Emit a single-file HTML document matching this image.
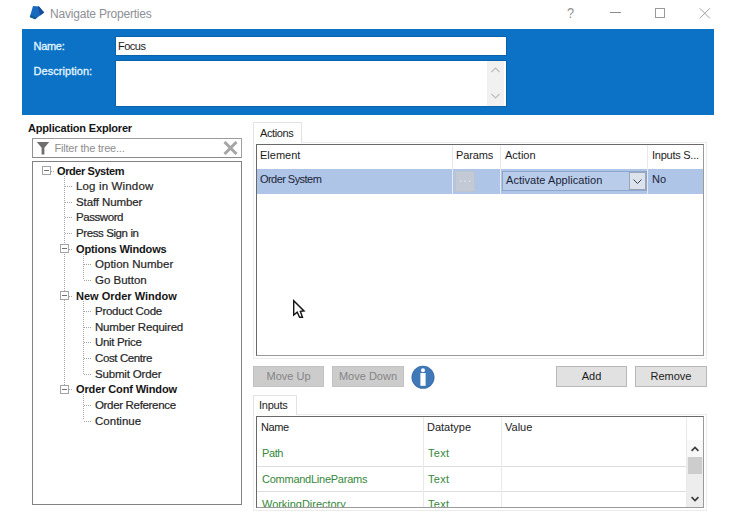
<!DOCTYPE html>
<html><head><meta charset="utf-8">
<style>
*{box-sizing:border-box;margin:0;padding:0}
html,body{width:735px;height:528px;background:#fff;overflow:hidden}
body{position:relative;font-family:"Liberation Sans",sans-serif;font-size:11px;color:#1c1c1c}
.abs{position:absolute}
.t{position:absolute;white-space:nowrap;line-height:14px}
#title{left:50px;top:7px;font-size:12px;color:#8d9095;letter-spacing:-0.2px}
#hdr{left:22px;top:29px;width:692px;height:85.5px;background:#0b72c5}
.hl{color:#e4f6ff;font-size:11px;-webkit-text-stroke:0.3px #e4f6ff}
#name{left:116px;top:37px;width:390px;height:18px;background:#fff;box-shadow:0 0 0 1px #0a62ab}
#desc{left:116px;top:61px;width:390px;height:45px;background:#fff;box-shadow:0 0 0 1px #0a62ab}
#dsb{left:487px;top:61px;width:17px;height:45px;background:#f1f1f1}
.tn{font-size:11.5px;-webkit-text-stroke:0.2px #262626;color:#262626}
.tb{font-weight:bold;color:#151515;font-size:11px}
.box{position:absolute;border:1px solid #7a7a7a;background:#fff}
.btn{position:absolute;border:1px solid #b8b8b8;background:#e1e1e1;font-size:11px;text-align:center;line-height:19px;height:21px;color:#1c1c1c}
.btn.dis{background:#cccccc;border-color:#c2c2c2;color:#858585}
.tab{position:absolute;background:#fff;border:1px solid #e2e2e2;border-bottom:none;font-size:11px;line-height:14px;color:#1c1c1c}
.ex{position:absolute;width:9px;height:9px;border:1px solid #a3a3a3;background:#fff}
.ex:after{content:"";position:absolute;left:1px;top:3px;width:5px;height:1px;background:#707070}
.dh{position:absolute;height:1px;background:repeating-linear-gradient(90deg,#a5a5a5 0 1px,transparent 1px 2px)}
.dv{position:absolute;width:1px;background:repeating-linear-gradient(180deg,#a5a5a5 0 1px,transparent 1px 2px)}
.grn{color:#35883a}
.vl{position:absolute;width:1px;background:#e9e9e9}
.hln{position:absolute;height:1px;background:#dedede}
.g{letter-spacing:-0.25px}
</style></head><body>
<!-- title bar -->
<svg class="abs" style="left:29px;top:5px" width="16" height="15" viewBox="29 5 16 15"><path d="M33 6 L39 6.4 L44.2 12.6 L35 19.2 L29.8 17 Z" fill="#1769bd"/><path d="M38 6.3 L39 6.4 L44.2 12.6 L40 15.6 Z" fill="#1a4a98"/><path d="M29.8 17 L35 19.2 L37 17.8 L30.3 15.2 Z" fill="#0f5a8a"/></svg>
<div class="t" id="title">Navigate Properties</div>
<div class="t" style="left:567px;top:6px;font-size:15px;color:#929292;transform:scaleX(0.85);transform-origin:left">?</div>
<div class="abs" style="left:610px;top:12px;width:11px;height:1px;background:#8a8a8a"></div>
<div class="abs" style="left:655px;top:8px;width:10px;height:10px;border:1px solid #999"></div>
<svg class="abs" style="left:699px;top:8px" width="12" height="11" viewBox="0 0 12 11"><path d="M0.8 0.3 L10.8 10.3 M10.8 0.3 L0.8 10.3" stroke="#a0a0a0" stroke-width="1" fill="none"/></svg>
<!-- header -->
<div class="abs" id="hdr"></div>
<div class="t hl" style="left:33.5px;top:39px;letter-spacing:-0.3px">Name:</div>
<div class="t hl" style="left:33.5px;top:64px;letter-spacing:0.05px">Description:</div>
<div class="abs" id="name"></div>
<div class="t" style="left:118px;top:39px;font-size:11px;letter-spacing:-0.5px">Focus</div>
<div class="abs" id="desc"></div>
<div class="abs" id="dsb"></div>
<svg class="abs" style="left:491px;top:67px" width="9" height="6" viewBox="0 0 9 6"><path d="M0.5 5 L4.5 1 L8.5 5" stroke="#bdbdbd" stroke-width="1.2" fill="none"/></svg>
<svg class="abs" style="left:491px;top:93px" width="9" height="6" viewBox="0 0 9 6"><path d="M0.5 1 L4.5 5 L8.5 1" stroke="#bdbdbd" stroke-width="1.2" fill="none"/></svg>
<!-- left panel -->
<div class="t" style="left:28px;top:121px;font-size:11px;font-weight:bold;color:#151515;letter-spacing:-0.18px">Application Explorer</div>
<div class="box" style="left:32px;top:138px;width:210px;height:20px;border-color:#9c9c9c #a0a0a0 #8a8a8a #909090"></div>
<svg class="abs" style="left:36px;top:141px" width="14" height="14" viewBox="0 0 14 14"><path d="M0.8 1 H13.2 L8.4 6.8 V13.4 H5.6 V6.8 Z" fill="#6f6f6f"/></svg>
<div class="t" style="left:54.5px;top:141px;font-size:11px;color:#8e8e8e;letter-spacing:-0.22px">Filter the tree...</div>
<svg class="abs" style="left:223px;top:141px" width="15" height="14" viewBox="0 0 15 14"><path d="M1.5 1 L13.5 13 M13.5 1 L1.5 13" stroke="#a6a6a6" stroke-width="3" fill="none"/></svg>
<div class="box" style="left:32px;top:161px;width:210px;height:344px;border-color:#828282"></div>
<div id="tree">
<div class="dv" style="left:64px;top:175.5px;height:209.8px"></div>
<div class="dv" style="left:83px;top:253.6px;height:26.2px"></div>
<div class="dv" style="left:83px;top:300.5px;height:73.1px"></div>
<div class="dv" style="left:83px;top:394.2px;height:26.2px"></div>
<div class="t tb" style="left:57px;top:163.5px;letter-spacing:-0.42px">Order System</div>
<div class="ex" style="left:42px;top:166.0px"></div>
<div class="dh" style="left:51px;top:170.5px;width:4px"></div>
<div class="t tn" style="left:76px;top:179.1px;letter-spacing:0.15px">Log in Window</div>
<div class="dh" style="left:65px;top:186.1px;width:8px"></div>
<div class="t tn" style="left:76px;top:194.8px;letter-spacing:-0.11px">Staff Number</div>
<div class="dh" style="left:65px;top:201.8px;width:8px"></div>
<div class="t tn" style="left:76px;top:210.4px;letter-spacing:-0.44px">Password</div>
<div class="dh" style="left:65px;top:217.4px;width:8px"></div>
<div class="t tn" style="left:76px;top:226.0px;letter-spacing:-0.40px">Press Sign in</div>
<div class="dh" style="left:65px;top:233.0px;width:8px"></div>
<div class="t tb" style="left:76px;top:241.6px;letter-spacing:-0.15px">Options Windows</div>
<div class="ex" style="left:60px;top:244.1px"></div>
<div class="dh" style="left:69px;top:248.6px;width:4px"></div>
<div class="t tn" style="left:95px;top:257.2px;letter-spacing:0.02px">Option Number</div>
<div class="dh" style="left:84px;top:264.2px;width:8px"></div>
<div class="t tn" style="left:95px;top:272.9px;letter-spacing:-0.01px">Go Button</div>
<div class="dh" style="left:84px;top:279.9px;width:8px"></div>
<div class="t tb" style="left:76px;top:288.5px;letter-spacing:-0.00px">New Order Window</div>
<div class="ex" style="left:60px;top:291.0px"></div>
<div class="dh" style="left:69px;top:295.5px;width:4px"></div>
<div class="t tn" style="left:95px;top:304.1px;letter-spacing:-0.28px">Product Code</div>
<div class="dh" style="left:84px;top:311.1px;width:8px"></div>
<div class="t tn" style="left:95px;top:319.8px;letter-spacing:-0.18px">Number Required</div>
<div class="dh" style="left:84px;top:326.8px;width:8px"></div>
<div class="t tn" style="left:95px;top:335.4px;letter-spacing:-0.33px">Unit Price</div>
<div class="dh" style="left:84px;top:342.4px;width:8px"></div>
<div class="t tn" style="left:95px;top:351.0px;letter-spacing:-0.39px">Cost Centre</div>
<div class="dh" style="left:84px;top:358.0px;width:8px"></div>
<div class="t tn" style="left:95px;top:366.6px;letter-spacing:-0.17px">Submit Order</div>
<div class="dh" style="left:84px;top:373.6px;width:8px"></div>
<div class="t tb" style="left:76px;top:382.2px;letter-spacing:-0.13px">Order Conf Window</div>
<div class="ex" style="left:60px;top:384.8px"></div>
<div class="dh" style="left:69px;top:389.2px;width:4px"></div>
<div class="t tn" style="left:95px;top:397.9px;letter-spacing:-0.33px">Order Reference</div>
<div class="dh" style="left:84px;top:404.9px;width:8px"></div>
<div class="t tn" style="left:95px;top:413.5px;letter-spacing:0.02px">Continue</div>
<div class="dh" style="left:84px;top:420.5px;width:8px"></div>
</div>
<!-- right: actions -->
<div class="abs" style="left:253px;top:142px;width:454px;height:217px;border:1px solid #ececec"></div>
<div class="tab" style="left:253px;top:122px;width:49px;height:21px;padding:2.5px 0 0 6px"><span style="letter-spacing:-0.4px">Actions</span></div>
<div class="box" style="left:256px;top:144px;width:448px;height:212px;border-color:#696969 #9a9a9a #9a9a9a #696969"></div>
<div class="abs" style="left:257px;top:169px;width:446px;height:25px;background:#afc5e7"></div>
<div class="vl" style="left:452px;top:145px;height:49px"></div>
<div class="vl" style="left:500px;top:145px;height:49px"></div>
<div class="vl" style="left:647px;top:145px;height:49px"></div>
<div class="t" style="left:260px;top:147.5px">Element</div>
<div class="t" style="left:456px;top:147.5px;letter-spacing:-0.15px">Params</div>
<div class="t" style="left:505px;top:147.5px">Action</div>
<div class="t g" style="left:652px;top:147.5px">Inputs S...</div>
<div class="t" style="left:260px;top:172px;letter-spacing:-0.55px;color:#1b2438">Order System</div>
<div class="abs" style="left:455px;top:171px;width:20px;height:21px;background:#c3cad6;border:1px solid #bcc4d2"></div>
<div class="t" style="left:459px;top:171px;font-size:12px;color:#e4e8ef;letter-spacing:1px">...</div>
<div class="abs" style="left:502px;top:171px;width:145px;height:20px;background:#b9cdeb;border:1px solid #8ea7d0"></div>
<div class="t" style="left:506px;top:173px;color:#1b2438;letter-spacing:0.05px">Activate Application</div>
<div class="abs" style="left:629px;top:172px;width:17px;height:18px;border:1px solid #9aa6b8;background:#dde3ec"></div>
<svg class="abs" style="left:633px;top:179px" width="9" height="6" viewBox="0 0 9 6"><path d="M0.5 0.5 L4.5 4.5 L8.5 0.5" stroke="#444" stroke-width="1" fill="none"/></svg>
<div class="t" style="left:652px;top:172px;color:#1b2438">No</div>
<!-- cursor -->
<svg class="abs" style="left:290px;top:296px" width="18" height="24" viewBox="290 296 18 24"><path d="M293.7 300.8 V315 L297.2 312.2 L299.6 317.3 H302.5 L300.3 311.3 L304 311 Z" fill="#fff" stroke="#151515" stroke-width="1.4" stroke-linejoin="miter"/></svg>
<!-- buttons -->
<div class="btn dis" style="left:253px;top:366px;width:71px">Move Up</div>
<div class="btn dis" style="left:332px;top:366px;width:72px">Move Down</div>
<svg class="abs" style="left:410px;top:364px" width="26" height="26" viewBox="410 364 26 26"><circle cx="423" cy="377.3" r="11.5" fill="#3a6fa8"/><circle cx="423" cy="377" r="10.6" fill="#4079b8"/><circle cx="423" cy="370.2" r="2" fill="#fff"/><rect x="420.4" y="373" width="5.2" height="12.8" fill="#fff"/></svg>
<div class="btn" style="left:556px;top:366px;width:71px">Add</div>
<div class="btn" style="left:635px;top:366px;width:72px">Remove</div>
<!-- inputs -->
<div class="abs" style="left:253px;top:414px;width:454px;height:97px;border:1px solid #ececec"></div>
<div class="tab" style="left:253px;top:395px;width:44px;height:20px;padding:2px 0 0 5px"><span class="g">Inputs</span></div>
<div class="box" style="left:256px;top:416px;width:448px;height:92px;border-color:#696969 #9a9a9a #9a9a9a #696969"></div>
<div class="hln" style="left:257px;top:466px;width:430px"></div>
<div class="hln" style="left:257px;top:491px;width:430px"></div>
<div class="vl" style="left:423px;top:417px;height:90px"></div>
<div class="vl" style="left:501px;top:417px;height:90px"></div>
<div class="vl" style="left:686px;top:417px;height:90px"></div>
<div class="t" style="left:261px;top:420px;letter-spacing:-0.4px">Name</div>
<div class="t" style="left:427px;top:420px">Datatype</div>
<div class="t" style="left:505px;top:420px">Value</div>
<div class="t grn" style="left:262px;top:446px;letter-spacing:-0.4px">Path</div>
<div class="t grn" style="left:428px;top:446px;letter-spacing:0.3px">Text</div>
<div class="t grn g" style="left:262px;top:471.5px">CommandLineParams</div>
<div class="t grn" style="left:428px;top:472px;letter-spacing:0.3px">Text</div>
<div class="abs" style="left:257px;top:492px;width:430px;height:15px;overflow:hidden">
<div class="t grn" style="left:5px;top:5px;letter-spacing:-0.03px">WorkingDirectory</div>
<div class="t grn" style="left:171px;top:5px;letter-spacing:0.3px">Text</div></div>
<div class="abs" style="left:687px;top:440px;width:16px;height:67px;background:linear-gradient(180deg,#f8f8f8 0 17px,#ededed 17px)"></div>
<div class="abs" style="left:688px;top:457px;width:14px;height:17px;background:#cdcdcd"></div>
<svg class="abs" style="left:691px;top:446px" width="8" height="6" viewBox="0 0 8 6"><path d="M0.6 4.8 L4 1.4 L7.4 4.8" stroke="#3c3c3c" stroke-width="1.7" fill="none"/></svg>
<svg class="abs" style="left:691px;top:496px" width="8" height="6" viewBox="0 0 8 6"><path d="M0.6 1.2 L4 4.6 L7.4 1.2" stroke="#3c3c3c" stroke-width="1.7" fill="none"/></svg>
</body></html>
